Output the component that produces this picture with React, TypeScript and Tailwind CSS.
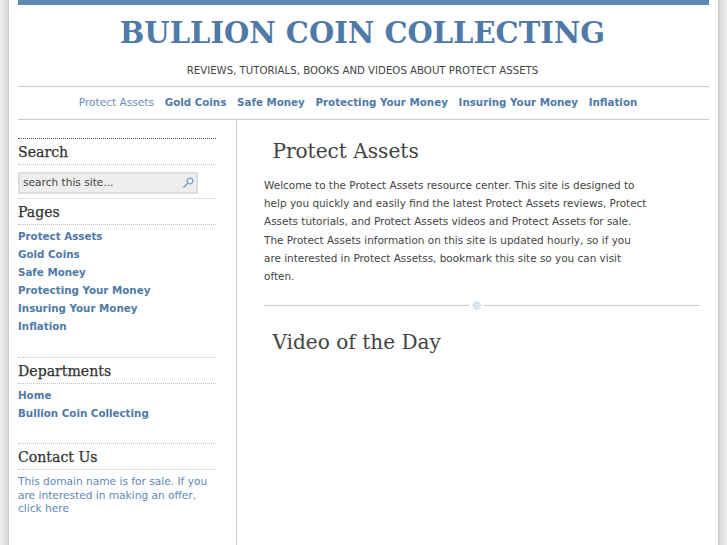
const pages = ["Protect Assets", "Gold Coins", "Safe Money", "Protecting Your Money", "Insuring Your Money", "Inflation"];

function SideHeading({ children }: { children: string }) {
  return (
    <h3 className="h-[26px] border-b border-dotted border-[#c4c4c4] font-['DejaVu_Serif',serif] text-[14.1px] leading-[26px] text-[#333] [-webkit-text-stroke:0.25px_#333]">
      {children}
    </h3>
  );
}

function LinkList({ items }: { items: string[] }) {
  return (
    <ul className="mt-[2px]">
      {items.map((item) => (
        <li key={item} className="h-[18px] text-[10.3px] font-bold leading-[18px] text-[#4f7aa8]">
          {item}
        </li>
      ))}
    </ul>
  );
}

export default function App() {
  return (
    <div className="h-[545px] w-[727px] overflow-hidden bg-[linear-gradient(90deg,#efefef_0px,#d8d8d8_8px,#bbb_9px,#fff_9px,#fff_718px,#c4c4c4_718px,#dcdcdc_720px,#efefef_727px)] px-[18px] font-['DejaVu_Sans',sans-serif]">
      <div className="h-[5px] bg-[#5f88b5]" />
      <header className="pr-[2px] text-center">
        <h1 className="mt-[9px] h-[38px] font-['DejaVu_Serif',serif] text-[29px] font-bold leading-[38px] text-[#4f7aa8]">
          BULLION COIN COLLECTING
        </h1>
        <p className="mt-[12px] h-[22px] text-[10.2px] leading-[14px] text-[#444]">
          REVIEWS, TUTORIALS, BOOKS AND VIDEOS ABOUT PROTECT ASSETS
        </p>
      </header>
      <nav className="flex h-[34px] items-center justify-center gap-[10.7px] border-y border-[#ccc] pr-[11px] text-[10.3px] text-[#4f7aa8]">
        {pages.map((page, i) => (
          <span key={page} className={i === 0 ? "text-[10.6px] text-[#6a8fb8]" : "font-bold"}>
            {page}
          </span>
        ))}
      </nav>
      <div className="flex h-[426px]">
        <aside className="w-[219px] shrink-0 border-r border-[#ccc] pr-[20px] pt-[18px]">
          <div className="border-t border-dotted border-[#555]">
            <SideHeading>Search</SideHeading>
            <div className="mt-[7px] flex h-[22px] w-[180px] items-center justify-between border-2 border-[#ddd] bg-[#eee] pl-[3px] pr-[2px] text-[10.6px] text-[#444]">
              <span>search this site...</span>
              <svg width="12" height="12" viewBox="0 0 12 12" fill="none" stroke="#7ea3c9" strokeWidth="1.3">
                <circle cx="8" cy="4" r="2.8" fill="#f4f7fa" />
                <path d="M6 6 1.5 10.5" strokeWidth="1.6" />
              </svg>
            </div>
          </div>
          <div className="mt-[4px] border-t border-dotted border-[#c4c4c4]">
            <SideHeading>Pages</SideHeading>
            <LinkList items={pages} />
          </div>
          <div className="mt-[22px] border-t border-dotted border-[#c4c4c4]">
            <SideHeading>Departments</SideHeading>
            <LinkList items={["Home", "Bullion Coin Collecting"]} />
          </div>
          <div className="mt-[21px] border-t border-dotted border-[#c4c4c4]">
            <SideHeading>Contact Us</SideHeading>
            <p className="mt-[5px] text-[10.6px] leading-[13.5px] text-[#5f88b5]">
              This domain name is for sale. If you are interested in making an offer, click here
            </p>
          </div>
        </aside>
        <main className="min-w-0 flex-1 pl-[27px] pr-[9px] pt-[16px]">
          <h2 className="pl-[8.4px] font-['DejaVu_Serif',serif] text-[20.1px] leading-[30px] text-[#444]">Protect Assets</h2>
          <p className="mt-[10px] w-[385px] text-[10.44px] leading-[18.2px] text-[#444]">
            Welcome to the Protect Assets resource center. This site is designed to help you quickly and easily find the latest Protect Assets reviews, Protect Assets tutorials, and Protect Assets videos and Protect Assets for sale. The Protect Assets information on this site is updated hourly, so if you are interested in Protect Assetss, bookmark this site so you can visit often.
          </p>
          <div className="mt-[16px] flex items-center gap-[3px]">
            <div className="h-px w-[205px] bg-[#ccc]" />
            <svg width="9" height="9" viewBox="0 0 10 10" className="shrink-0">
              <path d="M5 0v10M0 5h10M1.5 1.5l7 7M8.5 1.5l-7 7" stroke="#b9cfe6" strokeWidth="1.3" />
              <circle cx="5" cy="5" r="3.2" fill="#cfdeee" />
              <circle cx="5" cy="5" r="1.5" fill="#eef3f9" />
            </svg>
            <div className="h-px flex-1 bg-[#ccc]" />
          </div>
          <h2 className="mt-[17px] pl-[8.4px] font-['DejaVu_Serif',serif] text-[20.1px] leading-[30px] text-[#444]">Video of the Day</h2>
        </main>
      </div>
    </div>
  );
}
